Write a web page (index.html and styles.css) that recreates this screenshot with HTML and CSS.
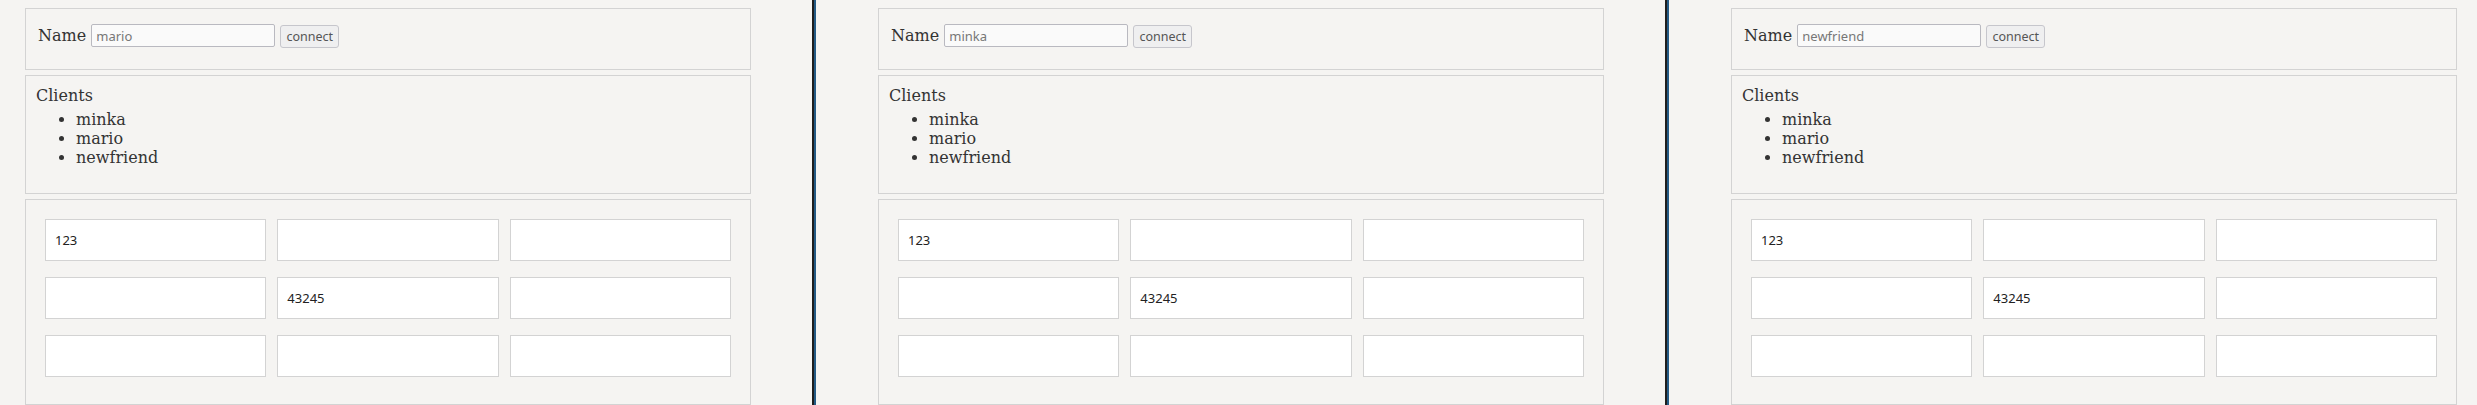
FILE: index.html
```html
<!DOCTYPE html>
<html lang="en">
<head>
    <meta charset="UTF-8">
    <meta name="viewport" content="width=device-width, initial-scale=1.0">
    <title>Shared board</title>
    <link rel="stylesheet" href="styles.css">
</head>
<body>
    <div class="split">
        <section class="app">
            <div class="box login">
                <label>Name</label>
                <input type="text" placeholder="mario">
                <button>connect</button>
            </div>
            <div class="box clients">
                <div class="title">Clients</div>
                <ul>
                    <li>minka</li>
                    <li>mario</li>
                    <li>newfriend</li>
                </ul>
            </div>
            <div class="box board">
                <div class="grid">
                    <div class="cell">123</div>
                    <div class="cell"></div>
                    <div class="cell"></div>
                    <div class="cell"></div>
                    <div class="cell">43245</div>
                    <div class="cell"></div>
                    <div class="cell"></div>
                    <div class="cell"></div>
                    <div class="cell"></div>
                </div>
            </div>
        </section>

        <div class="divider"></div>

        <section class="app">
            <div class="box login">
                <label>Name</label>
                <input type="text" placeholder="minka">
                <button>connect</button>
            </div>
            <div class="box clients">
                <div class="title">Clients</div>
                <ul>
                    <li>minka</li>
                    <li>mario</li>
                    <li>newfriend</li>
                </ul>
            </div>
            <div class="box board">
                <div class="grid">
                    <div class="cell">123</div>
                    <div class="cell"></div>
                    <div class="cell"></div>
                    <div class="cell"></div>
                    <div class="cell">43245</div>
                    <div class="cell"></div>
                    <div class="cell"></div>
                    <div class="cell"></div>
                    <div class="cell"></div>
                </div>
            </div>
        </section>

        <div class="divider"></div>

        <section class="app">
            <div class="box login">
                <label>Name</label>
                <input type="text" placeholder="newfriend">
                <button>connect</button>
            </div>
            <div class="box clients">
                <div class="title">Clients</div>
                <ul>
                    <li>minka</li>
                    <li>mario</li>
                    <li>newfriend</li>
                </ul>
            </div>
            <div class="box board">
                <div class="grid">
                    <div class="cell">123</div>
                    <div class="cell"></div>
                    <div class="cell"></div>
                    <div class="cell"></div>
                    <div class="cell">43245</div>
                    <div class="cell"></div>
                    <div class="cell"></div>
                    <div class="cell"></div>
                    <div class="cell"></div>
                </div>
            </div>
        </section>
    </div>
</body>
</html>
```

FILE: styles.css
```css
body {
    margin: 0;
    height: 405px;
    overflow: hidden;
    background: #f5f4f2;
    color: #333;
    font-family: 'DejaVu Serif', serif;
    font-size: 16px;
}

.split {
    display: flex;
    align-items: stretch;
    height: 100%;
    padding: 8px 0 0 25px;
    box-sizing: border-box;
}

.app {
    width: 726px;
    flex: none;
    display: flex;
    flex-direction: column;
    gap: 5px;
}

/* тёмная полоса между окнами */
.divider {
    flex: none;
    width: 2px;
    margin: -8px 62px 0 61px;
    border-left: 2px solid #1e1e1e;
    background: #245a85;
}

.box {
    border: 1px solid #d3d3d3;
    background: #f5f4f2;
    box-sizing: border-box;
}

.login {
    height: 62px;
    padding: 15px 12px 0;
}

.login label {
    font-size: 16px;
}

.login input {
    width: 184px;
    height: 23px;
    box-sizing: border-box;
    padding: 0 4px;
    border: 1px solid #b9b9c0;
    border-radius: 2px;
    background: #fafafa;
    font-family: 'Noto Sans', sans-serif;
    font-size: 13px;
    vertical-align: baseline;
}

.login input::placeholder {
    color: #777;
}

.login button {
    height: 23px;
    padding: 0 5px;
    border: 1px solid #c6c6cc;
    border-radius: 3px;
    background: #efeff0;
    color: #555;
    font-family: 'Noto Sans', sans-serif;
    font-size: 12.5px;
}

.clients {
    height: 119px;
    padding: 10px;
}

.clients ul {
    margin: 5px 0 15px;
}

.board {
    flex: 1;
    padding: 19px;
}

.grid {
    display: grid;
    grid-template-columns: repeat(3, 1fr);
    column-gap: 11px;
    row-gap: 16px;
}

.cell {
    height: 42px;
    box-sizing: border-box;
    padding: 11px 9px 0;
    border: 1px solid #d3d3d3;
    background: #fff;
    color: #222;
    font-family: 'Noto Sans', sans-serif;
    font-size: 13px;
}
```
